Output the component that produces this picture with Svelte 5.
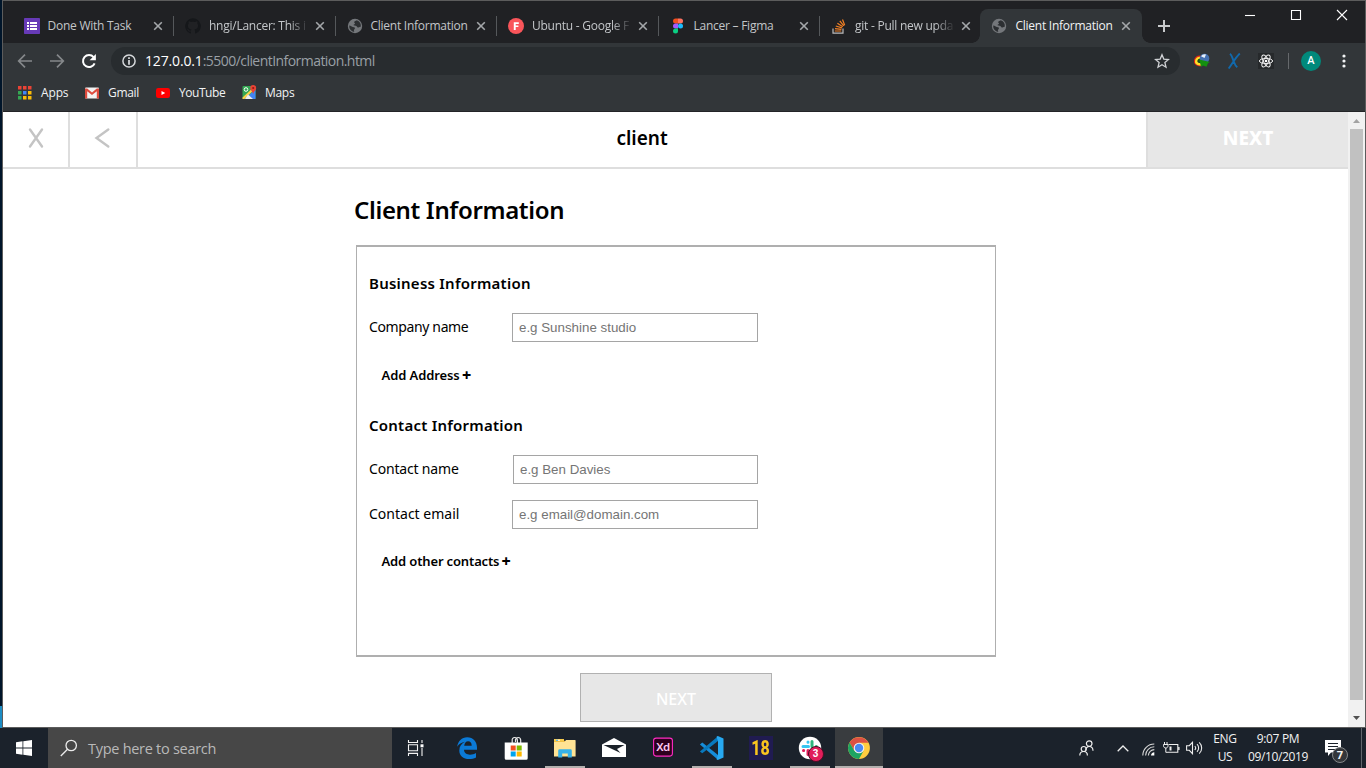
<script>
  const tabs = [
    { icon: 'forms', title: 'Done With Task' },
    { icon: 'github', title: 'hngi/Lancer: This i', faded: true },
    { icon: 'globe', title: 'Client Information' },
    { icon: 'gf', title: 'Ubuntu - Google F', faded: true },
    { icon: 'figma', title: 'Lancer – Figma' },
    { icon: 'so', title: 'git - Pull new upda', faded: true },
    { icon: 'globe', title: 'Client Information', active: true }
  ];
  const apps = [
    { icon: 'edge' },
    { icon: 'store' },
    { icon: 'folder', open: true },
    { icon: 'mail' },
    { icon: 'xd' },
    { icon: 'code', open: true },
    { icon: 'eighteen' },
    { icon: 'slack', open: true },
    { icon: 'chrome', open: true, focused: true }
  ];
  const rays = [0, 60, 120];
  const appGrid = ['#ea4335', '#ea4335', '#ea4335', '#34a853', '#4285f4', '#fbbc05', '#34a853', '#fbbc05', '#fbbc05'];
</script>

{#snippet favicon(name)}
  <svg class="fav" viewBox="0 0 16 16" width="16" height="16">
    {#if name === 'forms'}
      <rect width="16" height="16" rx="0.8" fill="#673ab7" />
      <path d="M3 4h2v2H3zM6 4h7v2H6zM3 7h2v2H3zM6 7h7v2H6zM3 10h2v2H3zM6 10h7v2H6z" fill="#fff" />
    {:else if name === 'github'}
      <path d="M8 .3a7.8 7.8 0 0 0-2.5 15.2c.4.1.5-.2.5-.4v-1.5c-2.2.5-2.7-.9-2.7-.9-.3-.9-.9-1.2-.9-1.2-.7-.5.1-.5.1-.5.8.1 1.2.8 1.2.8.7 1.2 1.9.9 2.3.7.1-.5.3-.9.5-1.1-1.8-.2-3.6-.9-3.6-3.9 0-.9.3-1.6.8-2.1-.1-.2-.4-1 .1-2.1 0 0 .7-.2 2.200.8a7.500 7.500 0 0 1 4 0c1.500-1 2.200-.8 2.200-.8.4 1.100.2 1.900.1 2.100.5.6.8 1.300.8 2.100 0 3-1.900 3.700-3.700 3.900.3.3.6.8.6 1.500v2.200c0 .2.1.5.5.4A7.800 7.800 0 0 0 8 .3z" fill="#15171a" />
    {:else if name === 'globe'}
      <circle cx="8" cy="8" r="7.2" fill="#74777b" />
      <path d="M2.2 7.4c2 .1 2.3 1.3 3.8 1.5 1.2.2 1.9.3 1.9 1.4 0 1-1 1.2-1 2.2 0 .8.4 1 .4 1.6A6.200 6.200 0 0 1 2.200 7.400zM9.800 2.300c-.9.8-2.600.8-2.600 1.900 0 .9.9.9.9 1.500 0 .8-1.500.3-1.500 1.300 0 .9 1.900.5 2.700.9.9.5.8 1.600 2.200 1.600 1 0 1.400-.7 2.300-.7A6.200 6.200 0 0 0 9.800 2.300z" fill="#2c2f32" />
    {:else if name === 'gf'}
      <circle cx="8" cy="8" r="8" fill="#f9555a" />
      <path d="M5.800 4.300h5v1.800H7.700v1.300h2.700v1.700H7.700v2.900H5.800z" fill="#fff" />
    {:else if name === 'figma'}
      <path d="M5.500.5H8v5H5.500a2.500 2.500 0 0 1 0-5z" fill="#f24e1e" />
      <path d="M8 .5h2.500a2.500 2.500 0 0 1 0 5H8z" fill="#ff7262" />
      <path d="M5.500 5.500H8v5H5.500a2.500 2.500 0 0 1 0-5z" fill="#a259ff" />
      <circle cx="10.500" cy="8" r="2.500" fill="#1abcfe" />
      <path d="M5.500 10.500H8V13a2.500 2.500 0 1 1-2.500-2.500z" fill="#0acf83" />
    {:else}
      <path d="M2 10.500v4.700h10v-4.700" fill="none" stroke="#bcbbbb" stroke-width="1.200" />
      <path d="M3.800 13h6.500M4 10.600l6.400.7M4.800 8l6.200 1.800M6.400 5.200l5.400 3.500M8.800 2.800l4 5.100M11.500 1.500l2.200 5.800" stroke="#f48024" stroke-width="1.200" fill="none" />
    {/if}
  </svg>
{/snippet}

{#snippet appicon(name)}
  {#if name === 'edge'}
    <svg width="24" height="24" viewBox="0 0 24 24">
      <path d="M2.200 10.700C3 5.300 6.700 1.200 12.200 1.200c6 0 9.800 4.300 9.800 10.300v2.300H9c.2 3.300 2.800 4.900 6 4.900 2.300 0 4.300-.6 6-1.600v4.400c-2 1.100-4.300 1.500-6.800 1.500-6 0-9.900-3.300-9.900-8.600 0-3.900 2.200-7 5.700-8.600-3.600.6-6 2.200-7.800 4.900zM9.200 9.700h7.500c0-2.800-1.300-4.500-3.600-4.500-2.200 0-3.600 1.800-3.900 4.500z" fill="#0b7ad7" />
    </svg>
  {:else if name === 'store'}
    <svg width="24" height="24" viewBox="0 0 24 24">
      <path d="M8.200 7V4.500a2.500 2.500 0 0 1 2.500-3c2 0 2.700 1.300 2.700 3V7M11.500 6V3.500C12 2.300 13 1.500 14.200 1.500c1.500 0 2.500 1.200 2.500 3V7" fill="none" stroke="#e8e8e8" stroke-width="1.200" />
      <path d="M.7 6.500h23v15.700a1.500 1.500 0 0 1-1.500 1.500h-20a1.500 1.500 0 0 1-1.500-1.500z" fill="#fff" />
      <path d="M6.700 9.500h5v5h-5z" fill="#f25022" /><path d="M12.700 9.500h5v5h-5z" fill="#7fba00" />
      <path d="M6.700 15.500h5v5h-5z" fill="#00a4ef" /><path d="M12.700 15.500h5v5h-5z" fill="#ffb900" />
    </svg>
  {:else if name === 'folder'}
    <svg width="24" height="24" viewBox="0 0 24 24">
      <path d="M1 3.500h9.500l1 1.500H22v4H1z" fill="#eab63c" />
      <path d="M1 6h10.500l1.500-2h9a.6.6 0 0 1 .6.6V20.500H1z" fill="#ffe394" />
      <path d="M1 3h10v2.500H1z" fill="#f7ca4d" /><path d="M3 3.700h4v1H3z" fill="#fff" /><path d="M3 3.700h2v1H3z" fill="#36a9e1" />
      <path d="M5.200 21.500v-6.800a1.400 1.400 0 0 1 1.400-1.400h10.800a1.400 1.400 0 0 1 1.400 1.400v6.800h-4v-4H9.200v4z" fill="#37b2e8" />
    </svg>
  {:else if name === 'mail'}
    <svg width="26" height="24" viewBox="0 0 26 24">
      <path d="M1 8.500 13 2l12 6.500V21H1z" fill="#fff" />
      <path d="M2.500 9h21l-7.500 4 3.500 4z" fill="#1c222a" />
    </svg>
  {:else if name === 'xd'}
    <svg width="22" height="22" viewBox="0 0 22 22">
      <rect x="1.600" y="1.100" width="18.800" height="18" rx="2.500" fill="#2e001e" stroke="#ff2bc2" stroke-width="1.100" />
      <text x="11" y="14.200" text-anchor="middle" class="xd">Xd</text>
    </svg>
  {:else if name === 'code'}
    <svg width="26" height="26" viewBox="0 0 26 26">
      <path d="M.9 9.400 3.300 7.600 19 20v4.700z" fill="#168dd9" />
      <path d="M.9 16.400 3.300 18.300 19 6V1.200z" fill="#0879bd" />
      <path d="M18.800 1 24.500 3.600V22.400L18.800 25 17.500 24.300 19 20V6l-1.500-4.300z" fill="#27a9f1" />
    </svg>
  {:else if name === 'eighteen'}
    <div class="eighteen"><span>18</span></div>
  {:else if name === 'slack'}
    <div class="slack">
      <svg width="24" height="24" viewBox="0 0 24 24">
        <circle cx="12" cy="12" r="11.200" fill="#fff" />
        <g stroke-width="3" stroke-linecap="round">
          <path d="M5 10.500h5.500M10 6v.2" stroke="#36c5f0" /><path d="M14 5.500v5M18.200 10.500h.2" stroke="#2eb67d" />
          <path d="M10 14.500v4M5.500 14.500h.2" stroke="#e01e5a" /><path d="M14 14.500h4M14 18.500v.1" stroke="#ecb22e" />
        </g>
      </svg>
      <span class="badge">3</span>
    </div>
  {:else}
    <svg width="24" height="24" viewBox="0 0 24 24">
      <circle cx="12" cy="12" r="10.900" fill="#ffcd40" />
      <path d="M2.600 6.500A10.900 10.900 0 0 1 21.500 6.700H12l-4.700 8z" fill="#dd5144" />
      <path d="M2.560 6.550A10.900 10.900 0 0 0 12 22.900l4.600-8.200L12 17 7.300 14.700z" fill="#1da462" />
      <circle cx="12" cy="12" r="5.300" fill="#f1f1f1" /><circle cx="12" cy="12" r="4.200" fill="#4a8af4" />
    </svg>
  {/if}
{/snippet}

<div class="screen">
  <div class="main">
    <div class="desktop"></div>
    <div class="window">
      <div class="tabstrip">
        {#each tabs as t}
          <div class="tab" class:active={t.active}>
            {@render favicon(t.icon)}
            <span class="title" class:faded={t.faded}>{t.title}</span>
            <svg class="close" width="10" height="10" viewBox="0 0 10 10"><path d="M1.200 1.200l7.600 7.600M8.800 1.200l-7.600 7.600" /></svg>
          </div>
        {/each}
        <svg class="plus" width="14" height="14" viewBox="0 0 14 14"><path d="M7 1v12M1 7h12" stroke="#c8cacc" stroke-width="2" /></svg>
        <div class="controls">
          <svg width="12" height="12" viewBox="0 0 12 12"><path d="M1 6.500h10" /></svg>
          <svg width="12" height="12" viewBox="0 0 12 12"><path d="M1.500 1.500h9v9h-9z" /></svg>
          <svg width="12" height="12" viewBox="0 0 12 12"><path d="M1 1l10 10M11 1L1 11" /></svg>
        </div>
      </div>

      <div class="toolbar">
        <svg class="nav" width="16" height="16" viewBox="0 0 16 16"><path d="M15 8H2M8 1.700 1.700 8 8 14.300" stroke="#85888b" stroke-width="1.700" fill="none" /></svg>
        <svg class="nav" width="16" height="16" viewBox="0 0 16 16"><path d="M1 8h13M8 1.700 14.300 8 8 14.300" stroke="#85888b" stroke-width="1.700" fill="none" /></svg>
        <svg class="nav" width="16" height="16" viewBox="0 0 16 16"><path d="M13.600 10.300A6 6 0 1 1 12.600 4.200" stroke="#fff" stroke-width="2" fill="none" /><path d="M14.900 1v6.300H8.600z" fill="#fff" /></svg>
        <div class="omnibox">
          <svg width="14" height="14" viewBox="0 0 14 14"><circle cx="7" cy="7" r="6.100" fill="none" stroke="#d5d7da" stroke-width="1.500" /><path d="M6.200 3.300h1.600v1.600H6.200zM6.200 6h1.600v4.700H6.200z" fill="#e8eaed" /></svg>
          <span class="url"><b>127.0.0.1</b>:5500/clientInformation.html</span>
          <svg class="star" width="16" height="16" viewBox="0 0 16 16"><path d="M8 1.800l1.800 4.300 4.700.4-3.600 3.100 1.100 4.600-4-2.500-4 2.500 1.100-4.600-3.600-3.100 4.700-.4z" fill="none" stroke="#d0d2d5" stroke-width="1.300" /></svg>
        </div>
        <div class="exts">
          <svg width="16" height="16" viewBox="0 0 16 16">
            <path d="M7 2.700A5.600 5.600 0 0 0 0 8.500c0 3.300 3.500 5.200 7.500 4.800L9 9z" fill="#e52817" />
            <path d="M7 4A4.500 4.500 0 0 0 1 8.700c0 2.600 2.700 3.800 6.500 3.700L9 8z" fill="#ffe028" />
            <path d="M7 5.500C4.500 5.400 3.300 6.800 3.300 8.300c0 1.500 2 2 4.500 1.800z" fill="#1a4a20" />
            <circle cx="10.500" cy="5.500" r="4.800" fill="#4470b0" /><path d="M7 3.300a4.500 4.500 0 0 1 5-1.800L10.500 5z" fill="#e6f0fa" />
            <path d="M5.300 6.600 15.800 9 14 10.200l-1.500 3.600L9 12.500l-2 1.300z" fill="#14900f" />
          </svg>
          <svg width="16" height="16" viewBox="0 0 16 16"><path d="M4 .8c2 1.500 2.300 4.200 3.500 7 1 2.800 1.700 5 3.800 6.500M13.800.5C9 5 7 10 2.700 15.500" fill="none" stroke="#1169ac" stroke-width="1.900" /></svg>
          <svg width="16" height="16" viewBox="0 0 16 16"><path d="M0 0h16v16H0z" fill="#26292b" />
            {#each rays as r}<ellipse cx="8" cy="8" rx="6.600" ry="2.600" transform="rotate({r} 8 8)" fill="none" stroke="#f2f2f2" stroke-width="1" />{/each}
            <circle cx="8" cy="8" r="1.300" fill="#fff" /></svg>
        </div>
        <i class="vline"></i>
        <span class="avatar">A</span>
        <svg class="dots" width="4" height="14" viewBox="0 0 4 14"><circle cx="2" cy="2" r="1.600" /><circle cx="2" cy="7" r="1.600" /><circle cx="2" cy="12" r="1.600" /></svg>
      </div>

      <div class="bookmarks">
        <svg width="14" height="14" viewBox="0 0 14 14">
          {#each appGrid as c, i}<rect x={(i % 3) * 5} y={Math.floor(i / 3) * 5} width="3.500" height="3.500" fill={c} />{/each}
        </svg>
        <span class="b1">Apps</span>
        <svg width="14" height="12" viewBox="0 0 14 12"><rect y=".5" width="14" height="11" rx="1" fill="#f2f2f2" /><path d="M0 1.500h2.200L7 5.500l4.800-4H14v10h-2.200V4.200L7 8 2.200 4.200v7.300H0z" fill="#dd4b3e" /></svg>
        <span class="b2">Gmail</span>
        <svg width="14" height="10" viewBox="0 0 14 10"><rect width="14" height="10" rx="2.300" fill="#f00" /><path d="M5.500 2.900v4.200L9.200 5z" fill="#fff" /></svg>
        <span class="b3">YouTube</span>
        <svg width="15" height="15" viewBox="0 0 15 15"><rect x=".5" y="1" width="13" height="13" rx="1" fill="#34a853" /><path d="M13.500 4 3 14h10.500z" fill="#4285f4" /><path d="M.5 12.500 12 2l1.500 1.300L2.500 14h-2z" fill="#fbd04b" /><path d="M6 9.500 11 14H3z" fill="#eee" /><circle cx="4" cy="4.500" r="1.800" fill="none" stroke="#fff" /><path d="M11.200 0a3 3 0 0 1 3 3c0 2.300-2.300 3.200-3 6-.7-2.800-3-3.700-3-6a3 3 0 0 1 3-3z" fill="#ea4335" /><circle cx="11.200" cy="3" r="1.100" fill="#8f1d15" /></svg>
        <span class="b4">Maps</span>
      </div>

      <div class="viewport">
        <div class="page">
          <header>
            <div class="cell"><svg width="16" height="22" viewBox="0 0 16 22"><path d="M2 2.500l12 17M14 2.500L2 19.500" /></svg></div>
            <div class="cell second"><svg width="16" height="22" viewBox="0 0 16 22"><path d="M14.300 2.500 2.500 11l11.800 8.500" /></svg></div>
            <h1>client</h1>
            <div class="next">NEXT</div>
          </header>
          <main>
            <h2>Client Information</h2>
            <section>
              <h3>Business Information</h3>
              <div class="row"><span class="company">Company name</span><div class="input">e.g Sunshine studio</div></div>
              <p class="add address">Add Address <b>+</b></p>
              <h3 class="contact">Contact Information</h3>
              <div class="row"><span class="name">Contact name</span><div class="input short">e.g Ben Davies</div></div>
              <div class="row last"><span>Contact email</span><div class="input email">e.g email@domain.com</div></div>
              <p class="add others">Add other contacts <b>+</b></p>
            </section>
            <div class="button">NEXT</div>
          </main>
        </div>
        <div class="scroll">
          <svg width="7" height="4" viewBox="0 0 7 4"><path d="M0 4 3.500 0 7 4z" fill="#a3a3a3" /></svg>
          <div class="thumb"></div>
          <svg width="7" height="4" viewBox="0 0 7 4"><path d="M0 0h7L3.500 4z" fill="#505050" /></svg>
        </div>
      </div>
    </div>
  </div>

  <div class="taskbar">
    <div class="start"><svg width="16" height="16" viewBox="0 0 16 16"><path d="M0 2.200 6.500 1.300v6.200H0zM7.300 1.200 16 0v7.500H7.300zM0 8.400h6.500v6.300L0 13.800zM7.300 8.400H16V16l-8.700-1.200z" fill="#fff" /></svg></div>
    <div class="search">
      <svg width="18" height="18" viewBox="0 0 18 18"><circle cx="11.200" cy="6.500" r="5.200" fill="none" stroke="#ececec" stroke-width="1.300" /><path d="M7.500 10.300.8 17" stroke="#ececec" stroke-width="1.300" /></svg>
      <span>Type here to search</span>
    </div>
    <div class="taskview"><svg width="17" height="16" viewBox="0 0 17 16"><path d="M1.500 0v2.500h9V0M1.500 4.800h9v6h-9zM1.500 16v-2.600h9V16M15 0v3M15 8v8" fill="none" stroke="#f2f2f2" stroke-width="1.100" /><path d="M13.500 4.300h3v3h-3z" fill="#fff" /></svg></div>
    {#each apps as a}
      <div class="app" class:open={a.open} class:focused={a.focused}>{@render appicon(a.icon)}</div>
    {/each}
    <div class="tray">
      <svg width="15" height="16" viewBox="0 0 15 16"><g fill="none" stroke="#eee" stroke-width="1.200"><circle cx="10.200" cy="3.600" r="2.800" /><path d="M6.800 10.500c0-2.300 1.300-4 3.400-4s3.800 1.700 3.800 4.300" /><circle cx="4.700" cy="9" r="2.500" /><path d="M.8 15.500c0-2.300 1.500-4 3.900-4s3.700 1.700 3.700 4" /></g></svg>
      <svg class="chev" width="12" height="7" viewBox="0 0 12 7"><path d="M.7 6.300 6 1l5.300 5.300" fill="none" stroke="#eee" stroke-width="1.300" /></svg>
      <svg class="wifi" width="13" height="13" viewBox="0 0 13 13"><g fill="none" stroke="#d8d8d8" stroke-width="1.100"><path d="M.8 12.500C.8 6 6 1 12.300 1M3.600 12.500c0-5 4-8.700 8.700-8.700M6.400 12.500c0-3.400 2.700-5.900 5.900-5.900" /></g><path d="M9 12.500c0-2 1.400-3.300 3.300-3.300v3.300z" fill="#fff" /></svg>
      <svg class="batt" width="17" height="12" viewBox="0 0 17 12"><path d="M5.500 2.500h9.300v7.800H5.500M16 5v3" fill="none" stroke="#eee" stroke-width="1.100" /><path d="M1.500 0v2.500M4 0v2.500M.5 2.500H5v1.300C5 5.200 4 6 2.800 6 1.600 6 .5 5.200.5 3.800zM2.800 6v4.300h3" fill="none" stroke="#eee" stroke-width="1" /><path d="M6.500 4.500h2v4h-2z" fill="#eee" /></svg>
      <svg class="vol" width="17" height="14" viewBox="0 0 17 14"><path d="M.6 4.700h2.700L6.500 1.300v11.400L3.300 9.300H.6zM8.800 5a3 3 0 0 1 0 4M11 3.200a5.200 5.200 0 0 1 0 7.600M13.200 1.300a7.800 7.800 0 0 1 0 11.400" fill="none" stroke="#eee" stroke-width="1.100" /></svg>
      <div class="lang"><span>ENG</span><span>US</span></div>
      <div class="clock"><span class="time">9:07 PM</span><span class="date">09/10/2019</span></div>
      <div class="action">
        <svg width="17" height="17" viewBox="0 0 17 17"><path d="M0 0h16v12.500H6L3 16v-3.500H0z" fill="#fff" /><path d="M3 3.500h10M3 6.500h10M3 9.500h7" stroke="#1b222b" stroke-width="1" /></svg>
        <span class="count">7</span>
      </div>
      <i class="peek"></i>
    </div>
  </div>
</div>

<style>
  :global(body) { margin: 0; overflow: hidden; background: #fff; }
  * { box-sizing: border-box; }
  svg { display: block; flex: none; }
  .screen { width: 1366px; height: 768px; display: flex; flex-direction: column; overflow: hidden; font-family: "Open Sans", "Noto Sans", sans-serif; }
  .main { height: 728px; display: flex; flex: none; }
  .desktop { width: 2px; background: linear-gradient(#00152a 0 706px, #1c8cc4 706px); }
  .window { width: 1364px; height: 728px; border: 1px solid #5c5c5c; display: flex; flex-direction: column; }

  .tabstrip { height: 42px; flex: none; background: #202124; display: flex; align-items: flex-end; padding-left: 9.500px; }
  .tab { width: 161.500px; height: 34px; padding: 0 11px; display: flex; align-items: center; position: relative; flex: none; }
  .tab:not(.active)::after { content: ""; position: absolute; right: 0; top: 7px; width: 1px; height: 20px; background: #55585b; }
  .tab:nth-child(6)::after { display: none; }
  .tab.active { width: 162px; margin-left: -1.500px; background: #323639; border-radius: 8px 8px 0 0; }
  .tab.active::before, .tab.active::after { content: ""; position: absolute; bottom: 0; width: 8px; height: 8px; }
  .tab.active::before { left: -8px; background: radial-gradient(circle at 0 0, #202124 7.500px, #323639 8px); }
  .tab.active::after { right: -8px; background: radial-gradient(circle at 100% 0, #202124 7.500px, #323639 8px); }
  .title { width: 100px; margin-left: 8px; font-size: 12px; line-height: 16px; letter-spacing: -0.250px; color: #c3c6c9; white-space: nowrap; }
  .title.faded { -webkit-mask-image: linear-gradient(90deg, #000 80px, transparent 100px); mask-image: linear-gradient(90deg, #000 80px, transparent 100px); }
  .tab.active .title { color: #f1f3f4; margin-left: 8.500px; }
  .close { margin-left: 6px; }
  .close path { stroke: #a4a7aa; stroke-width: 1.600; }
  .plus { margin: 0 0 10px 15px; }
  .controls { margin-left: auto; align-self: flex-start; display: flex; gap: 34px; padding: 8px 17px 0 0; }
  .controls path { fill: none; stroke: #fff; stroke-width: 1.100; }

  .toolbar { height: 36px; flex: none; background: #323639; display: flex; align-items: center; padding-left: 14px; }
  .nav { margin-right: 16px; }
  .omnibox { width: 1069px; height: 28px; margin-left: -2px; border-radius: 14px; background: #282c2f; display: flex; align-items: center; padding: 0 10px 0 11px; }
  .url { margin-left: 9px; font-size: 14px; letter-spacing: -0.550px; line-height: 20px; color: #9aa0a6; }
  .url b { color: #fff; font-weight: 400; letter-spacing: -0.150px; }
  .star { margin-left: auto; }
  .exts { display: flex; gap: 16px; margin-left: 14px; }
  .vline { width: 1px; height: 16px; background: #66696c; margin-left: 14px; }
  .avatar { width: 20px; height: 20px; margin-left: 12px; border-radius: 50%; background: #00897b; color: #fff; font: 500 11px/20px Roboto, sans-serif; text-align: center; }
  .dots { margin-left: 20.500px; fill: #f1f3f4; }

  .bookmarks { height: 33px; flex: none; background: #323639; border-bottom: 1px solid #232427; display: flex; align-items: center; padding: 0 0 5px 15px; font-size: 12px; letter-spacing: -0.150px; color: #f1f3f4; }
  .b1 { width: 44px; margin-left: 9px; }
  .b2 { width: 48px; margin-left: 9px; letter-spacing: -0.300px; }
  .b3 { width: 63px; margin-left: 9px; letter-spacing: -0.450px; }
  .b4 { margin-left: 8px; letter-spacing: -0.300px; }

  .viewport { flex: 1; display: flex; min-height: 0; }
  .page { width: 1345px; background: #fff; font-family: "Noto Sans", sans-serif; color: #000; }
  header { height: 57px; border-bottom: 2px solid #dedede; display: flex; }
  .cell { width: 67px; height: 55px; border-right: 2px solid #dedede; display: flex; align-items: center; justify-content: center; padding: 0 0 3px 0; }
  .cell.second { width: 68px; padding-right: 2px; }
  .cell path { fill: none; stroke: #c4c4c4; stroke-width: 2.400; stroke-linecap: round; }
  h1 { flex: 1; margin: 0; font-size: 19px; font-weight: 600; line-height: 53px; text-align: center; }
  .next { width: 202px; background: #e7e7e7; border-left: 2px solid #dedede; color: #fff; font-size: 19px; font-weight: 800; line-height: 53px; text-align: center; }
  main { padding: 24px 0 0 351px; display: flex; flex-direction: column; }
  h2 { margin: 0; font-size: 24px; font-weight: 600; line-height: 34px; letter-spacing: -0.340px; }
  section { width: 640px; height: 412px; margin: 18px 0 0 2px; border: 1px solid #afafaf; border-width: 2px 1px; padding: 24px 0 0 12px; }
  h3 { margin: 0; font-size: 15px; font-weight: 600; line-height: 24px; letter-spacing: 0.240px; }
  .row { height: 29px; display: flex; align-items: center; justify-content: space-between; width: 389px; margin-top: 18px; font-size: 14px; }
  .row span { padding-bottom: 2px; }
  .row.last { margin-top: 16px; }
  .company { letter-spacing: -0.370px; }
  .name { letter-spacing: -0.180px; }
  .input { width: 246px; height: 29px; border: 1px solid #a5a5a5; padding-left: 6px; font: 13.333px/27px "Liberation Sans", Arial, sans-serif; color: #757575; }
  .input.short { width: 245px; }
  .add { margin: 22px 0 0 12.500px; font-size: 13px; font-weight: 600; line-height: 22px; height: 22px; letter-spacing: -0.100px; }
  .add b { font-size: 16px; font-weight: 800; line-height: 1; margin-left: -1px; position: relative; top: 1px; }
  .others { margin-top: 21px; letter-spacing: -0.150px; }
  .contact { margin-top: 27px; }
  .button { width: 192px; height: 49px; margin: 16px 0 0 226px; border: 1px solid #b1b1b1; background: #e7e7e7; color: #fff; font-size: 16px; font-weight: 500; line-height: 50px; text-align: center; }
  .scroll { width: 17px; background: #f1f1f1; display: flex; flex-direction: column; align-items: center; padding: 7px 0; }
  .thumb { width: 13px; height: 571px; margin: 6px 0 auto; background: #c1c1c1; }

  .taskbar { height: 40px; background: #1b222b; display: flex; color: #f2f2f2; }
  .start { width: 48px; display: flex; align-items: center; justify-content: center; }
  .search { width: 344px; background: #474747; display: flex; align-items: center; padding-left: 12px; gap: 10px; font-size: 14.500px; letter-spacing: -0.280px; color: #b9b9b9; }
  .taskview { width: 51px; display: flex; align-items: center; padding-left: 15px; }
  .app { width: 49px; height: 40px; display: flex; align-items: center; justify-content: center; position: relative; padding-right: 2px; }
  .app.open::after { content: ""; position: absolute; left: 4px; bottom: 0; width: 40px; height: 2px; background: #b3b0ae; }
  .app.focused { width: 48px; background: #393c3f; padding: 0; }
  .app.focused::after { left: 0; width: 48px; }
  .xd { font: 600 11.500px "Noto Sans", sans-serif; letter-spacing: -0.500px; fill: #ffc9f2; }
  .eighteen { width: 24px; height: 24px; background: #201b51; color: #f9c51e; font: 800 20px/24px "Roboto", sans-serif; display: flex; justify-content: center; }
  .eighteen span { transform: scaleX(0.8); }
  .slack { position: relative; }
  .badge { position: absolute; left: 10px; top: 10px; width: 16px; height: 16px; border-radius: 50%; background: #e01e5a; border: 1px solid #4b0c24; font: 700 10px/14px "Liberation Sans", sans-serif; color: #fff; text-align: center; }
  .tray { margin-left: auto; display: flex; align-items: center; height: 40px; }
  .chev { margin-left: 23px; }
  .wifi { margin: 3px 0 0 13px; }
  .batt { margin-left: 8px; }
  .vol { margin-left: 6px; }
  .lang, .clock { display: flex; flex-direction: column; align-items: center; font-size: 12px; line-height: 18px; letter-spacing: -0.350px; white-space: nowrap; }
  .lang { width: 26px; margin-left: 9px; }
  .clock { width: 60px; margin-left: 10px; }
  .action { position: relative; margin-left: 17px; }
  .count { position: absolute; left: 7px; top: 7px; width: 16px; height: 16px; border: 1px solid #85888a; border-radius: 50%; background: #33363a; font: 700 11px/14px "Open Sans", sans-serif; text-align: center; }
  .peek { width: 1px; height: 40px; background: #60656b; margin: 0 4px 0 19px; }
</style>
